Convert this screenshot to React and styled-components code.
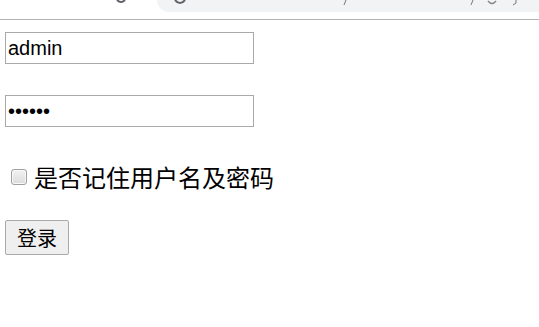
import React from 'react';
import styled, { createGlobalStyle } from 'styled-components';

const GlobalStyle = createGlobalStyle`
    html, body {
        margin: 0;
        padding: 0;
        background: #ffffff;
        font-family: Arial, "Liberation Sans", "Noto Sans CJK SC", sans-serif;
    }
`

const Chrome = styled.div`
    height: 19px;
    display: flex;
    align-items: flex-start;
    border-bottom: 1px solid #b4b4b4;
    overflow: hidden;
`

const NavIcons = styled.div`
    width: 157px;
    height: 12px;
    position: relative;
    flex-shrink: 0;
`

const Omnibox = styled.div`
    flex: 1;
    height: 12px;
    background: #f1f3f4;
    border-bottom-left-radius: 14px;
    position: relative;
`

const Fragment = styled.svg`
    position: absolute;
    top: 0;
`

const Page = styled.div`
    padding: 12px 0 0 5px;
    display: flex;
    flex-direction: column;
    align-items: flex-start;
`

const TextInput = styled.input`
    box-sizing: border-box;
    width: 249px;
    height: 32px;
    margin: 0;
    padding: 0 2px;
    border: 1px solid #a9a9a9;
    border-radius: 0;
    font-family: Arial, "Liberation Sans", sans-serif;
    font-size: 20px;
    color: #000;
    outline: none;
    margin-bottom: ${p => p.$gap}px;
`

const CheckRow = styled.label`
    display: flex;
    align-items: center;
    gap: 7px;
    padding-left: 6px;
    height: 26px;
    margin-bottom: 30px;
`

const Box = styled.span`
    box-sizing: border-box;
    width: 16px;
    height: 16px;
    border: 1px solid #a0a0a0;
    border-radius: 3px;
    background: linear-gradient(#f2f2f2, #dcdcdc);
    box-shadow: inset 0 0 0 1px #f8f8f8;
`

const CheckText = styled.span`
    font-family: "Noto Sans CJK SC", sans-serif;
    font-size: 24px;
    line-height: 26px;
    color: #000;
`

const Button = styled.button`
    box-sizing: border-box;
    width: 64px;
    height: 35px;
    margin: 0;
    padding: 0;
    border: 1px solid #a9a9a9;
    border-radius: 2px;
    background: #efefef;
    font-family: "Noto Sans CJK SC", sans-serif;
    font-size: 20px;
    color: #000;
`

function App() {
    return (
        <>
            <GlobalStyle />
            <Chrome>
                <NavIcons>
                    <Fragment width="10" height="4" style={{ left: 116 }}>
                        <path d="M1 0 Q5 4 9 0" stroke="#5f6368" strokeWidth="2" fill="none" />
                    </Fragment>
                </NavIcons>
                <Omnibox>
                    <Fragment width="12" height="5" style={{ left: 17 }}>
                        <path d="M1 0 Q6 6 11 0" stroke="#5f6368" strokeWidth="2" fill="none" />
                    </Fragment>
                    <Fragment width="6" height="6" style={{ left: 185 }}>
                        <path d="M4 0 L2 5" stroke="#777" strokeWidth="1" fill="none" />
                    </Fragment>
                    <Fragment width="6" height="6" style={{ left: 312 }}>
                        <path d="M4 0 L2 5" stroke="#777" strokeWidth="1" fill="none" />
                    </Fragment>
                    <Fragment width="10" height="6" style={{ left: 330 }}>
                        <path d="M1 1 Q5 6 9 1" stroke="#888" strokeWidth="1.5" fill="none" />
                    </Fragment>
                    <Fragment width="6" height="6" style={{ left: 356 }}>
                        <path d="M3 0 L3 3 L0 5" stroke="#777" strokeWidth="1" fill="none" />
                    </Fragment>
                </Omnibox>
            </Chrome>
            <Page>
                <TextInput type="text" defaultValue="admin" $gap={31} />
                <TextInput type="password" defaultValue="123456" $gap={37} />
                <CheckRow>
                    <Box />
                    <CheckText>是否记住用户名及密码</CheckText>
                </CheckRow>
                <Button>登录</Button>
            </Page>
        </>
    )
}

export default App;
